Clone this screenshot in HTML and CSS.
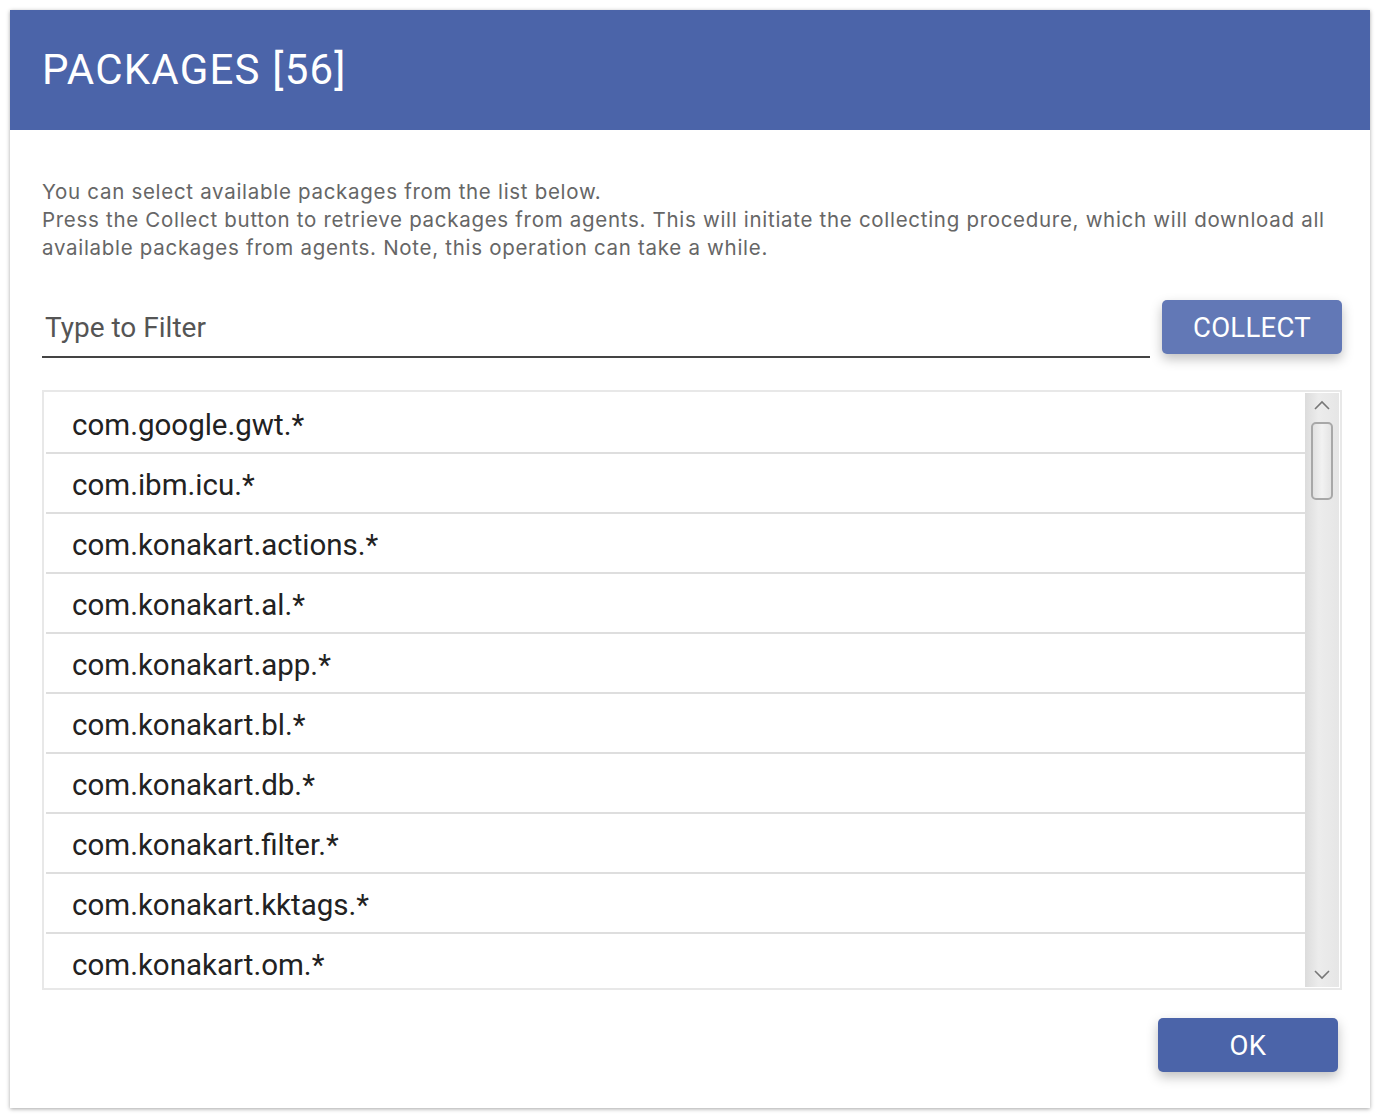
FILE: index.html
```html
<!DOCTYPE html>
<html>
<head>
<meta charset="utf-8">
<link rel="stylesheet" href="styles.css">
</head>
<body>
<div class="dialog">
  <div class="header"><h1 class="title">PACKAGES [56]</h1></div>
  <div class="content">
    <p class="desc">You can select available packages from the list below.<br>Press the Collect button to retrieve packages from agents. This will initiate the collecting procedure, which will download all available packages from agents. Note, this operation can take a while.</p>
    <div class="filter-row">
      <div class="filter"><span class="placeholder">Type to Filter</span></div>
      <button class="btn btn-collect">COLLECT</button>
    </div>
    <div class="list">
      <div class="rows">
        <div class="row">com.google.gwt.*</div>
        <div class="row">com.ibm.icu.*</div>
        <div class="row">com.konakart.actions.*</div>
        <div class="row">com.konakart.al.*</div>
        <div class="row">com.konakart.app.*</div>
        <div class="row">com.konakart.bl.*</div>
        <div class="row">com.konakart.db.*</div>
        <div class="row">com.konakart.filter.*</div>
        <div class="row">com.konakart.kktags.*</div>
        <div class="row">com.konakart.om.*</div>
      </div>
      <div class="scrollbar">
        <svg class="arrow" width="20" height="12" viewBox="0 0 20 12"><path d="M3 10 L10 3 L17 10" fill="none" stroke="#777" stroke-width="1.6"/></svg>
        <div class="track"><div class="thumb"></div></div>
        <svg class="arrow" width="20" height="12" viewBox="0 0 20 12"><path d="M3 2 L10 9 L17 2" fill="none" stroke="#777" stroke-width="1.6"/></svg>
      </div>
    </div>
    <div class="footer"><button class="btn btn-ok">OK</button></div>
  </div>
</div>
</body>
</html>
```
FILE: styles.css
```css
html, body { margin: 0; padding: 0; background: #fff; }
body { padding: 10px; }
.dialog {
  width: 1360px;
  height: 1098px;
  background: #fff;
  box-shadow: 0 1px 4px rgba(0,0,0,0.35);
  display: flex;
  flex-direction: column;
}
.header {
  height: 120px;
  background: #4b64a9;
  display: flex;
  align-items: center;
  padding-left: 32px;
  box-sizing: border-box;
}
.title {
  margin: 0;
  font-family: Roboto, "Liberation Sans", sans-serif;
  font-weight: 400;
  font-size: 42px;
  color: #fff;
  letter-spacing: 1.2px;
  padding-bottom: 2px;
}
.content {
  padding: 48px 28px 0 32px;
  display: flex;
  flex-direction: column;
}
.desc {
  margin: 0;
  font-family: Inter, "Open Sans", sans-serif;
  font-size: 20.5px;
  letter-spacing: 0.7px;
  line-height: 28px;
  color: #666;
}
.filter-row {
  display: flex;
  align-items: flex-start;
  gap: 12px;
  margin-top: 38px;
}
.filter {
  flex: 1;
  height: 56px;
  border-bottom: 2px solid #444;
  display: flex;
  align-items: center;
  padding-left: 3px;
}
.placeholder {
  font-family: Roboto, "Liberation Sans", sans-serif;
  font-size: 28px;
  color: #555;
  margin-top: -2px;
}
.btn {
  border: none;
  border-radius: 5px;
  color: #fff;
  font-family: Roboto, "Liberation Sans", sans-serif;
  font-size: 27.5px;
  width: 180px;
  height: 54px;
  box-shadow: 0 5px 12px rgba(0,0,0,0.25);
  padding: 0;
  letter-spacing: 0.3px;
}
.btn-collect { background: #6278b6; }
.btn-ok { background: #4b64a9; }
.list {
  margin-top: 32px;
  height: 600px;
  box-sizing: border-box;
  border: 2px solid #e8e8e8;
  padding: 2px 1px 1px 2px;
  display: flex;
  overflow: hidden;
}
.rows {
  flex: 1;
  overflow: hidden;
}
.row {
  height: 58px;
  box-sizing: border-box;
  padding-top: 3px;
  border-bottom: 2px solid #dedede;
  display: flex;
  align-items: center;
  padding-left: 26px;
  font-family: Roboto, "Liberation Sans", sans-serif;
  font-size: 29.5px;
  color: #222;
}
.row { height: 60px; }
.scrollbar {
  width: 34px;
  margin-top: -1px;
  background: linear-gradient(to right, #dcdcdc, #ececec 40%, #e6e6e6);
  display: flex;
  flex-direction: column;
  align-items: center;
}
.arrow { margin: 6px 0; flex: none; }
.track { flex: 1; width: 100%; display: flex; justify-content: center; }
.thumb {
  width: 22px;
  height: 78px;
  box-sizing: border-box;
  border: 2px solid #a8a8a8;
  border-radius: 5px;
  background: linear-gradient(to right, #e2e2e2, #f2f2f2 50%, #e4e4e4);
  margin-top: 5px;
}
.footer {
  display: flex;
  justify-content: flex-end;
  margin-top: 28px;
  padding-right: 4px;
}
```
